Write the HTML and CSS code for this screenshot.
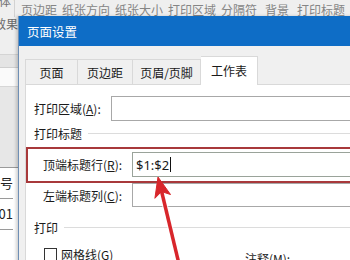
FILE: index.html
```html
<!DOCTYPE html>
<html lang="zh-CN">
<head>
    <meta charset="UTF-8">
    <title>页面设置</title>
    <link rel="stylesheet" href="styles.css">
</head>
<body>
<div class="app">
    <!-- excel behind the dialog -->
    <div class="ribbon">
        <div class="ribbon-top">
            <div class="font-box">宋体 ▾</div>
            <div class="menu">
                <span>页边距</span>
                <span>纸张方向</span>
                <span>纸张大小</span>
                <span>打印区域</span>
                <span>分隔符</span>
                <span class="wide">背景</span>
                <span class="wide">打印标题</span>
            </div>
        </div>
        <div class="ribbon-sub">效果</div>
    </div>
    <div class="sheet">
        <div class="bar"></div>
        <div class="formula"></div>
        <div class="heads"></div>
        <div class="cell"><span>编号</span></div>
        <div class="cell"><span>001</span></div>
        <div class="cell"></div>
    </div>

    <div class="dialog">
        <div class="title-bar">页面设置</div>
        <div class="dialog-body">
            <div class="tabs">
                <div class="tab t1">页面</div>
                <div class="tab t2">页边距</div>
                <div class="tab t3">页眉/页脚</div>
                <div class="tab t4 active">工作表</div>
            </div>
            <div class="panel">
                <div class="row row-area">
                    <label class="lbl">打印区域(<u>A</u>):</label>
                    <div class="input"></div>
                </div>
                <div class="group">
                    <span>打印标题</span>
                    <div class="rule"></div>
                </div>
                <div class="mark">
                    <div class="row row-sub">
                        <label class="lbl lbl-sub">顶端标题行(<u>R</u>):</label>
                        <div class="input focus"><span class="val">$1:$2</span><span class="caret"></span></div>
                    </div>
                </div>
                <div class="row row-sub row-left">
                    <label class="lbl lbl-sub">左端标题列(<u>C</u>):</label>
                    <div class="input"></div>
                </div>
                <div class="group group-print">
                    <span>打印</span>
                    <div class="rule"></div>
                </div>
                <div class="checks">
                    <div class="check"><span class="box"></span>网格线(<u>G</u>)</div>
                    <div class="note">注释(<u>M</u>):</div>
                </div>
            </div>
        </div>
    </div>

    <svg class="arrow" width="350" height="260" viewBox="0 0 350 260">
        <line x1="161.5" y1="191" x2="179" y2="264" stroke="#fff" stroke-width="6" opacity="0.7"/>
        <line x1="161.5" y1="191" x2="179" y2="264" stroke="#d8262b" stroke-width="3.5"/>
        <polygon points="158,177 170.5,194.5 161.5,191.6 154.9,198.3" fill="#d8262b" stroke="#d8262b" stroke-width="1" stroke-linejoin="round"/>
    </svg>
</div>
</body>
</html>
```

FILE: styles.css
```css
body {
    margin: 0;
    font-family: "Noto Sans CJK SC", "Noto Sans", sans-serif;
    font-size: 12px;
    color: #1a1a1a;
}

.app {
    position: relative;
    width: 350px;
    height: 260px;
    overflow: hidden;
    background: #fff;
}

/* background spreadsheet */
.ribbon {
    height: 55px;
    background: #efefef;
    border-bottom: 1px solid #d4d4d4;
    box-sizing: border-box;
}

.ribbon-top {
    display: flex;
    height: 17px;
}

.font-box {
    width: 39px;
    border-right: 1px solid #d2d2d2;
    margin-left: -13px;
    margin-top: -6px;
    line-height: 14px;
    color: #707070;
    overflow: hidden;
    white-space: nowrap;
}

.menu {
    display: flex;
    padding-left: 6px;
    padding-top: 1px;
    color: #858585;
    line-height: 17px;
    white-space: nowrap;
}

.menu span {
    margin-right: 5px;
}

.menu span.wide {
    margin-left: 3px;
}

.ribbon-sub {
    margin-left: -6px;
    line-height: 14px;
    color: #6a6a6a;
}

.sheet .bar {
    height: 12px;
    background: #e4e4e4;
    border-bottom: 1px solid #cfcfcf;
}

.sheet .formula {
    height: 18px;
    background: #fafafa;
    border-bottom: 1px solid #d6d6d6;
}

.sheet .heads {
    height: 80px;
    background: #e7e7e7;
    border-bottom: 1px solid #9a9a9a;
}

.sheet .cell {
    height: 30px;
    border-bottom: 1px solid #9a9a9a;
    line-height: 30px;
    font-size: 13px;
    color: #222;
    display: flex;
    justify-content: flex-end;
    width: 13px;
    white-space: nowrap;
}

/* page setup dialog */
.dialog {
    position: absolute;
    left: 18px;
    top: 16px;
    width: 345px;
    height: 250px;
    background: #f0f0f0;
    border-left: 1px solid #6f8fb5;
    box-shadow: -2px 0 3px rgba(0, 0, 0, 0.18);
}

.title-bar {
    height: 30px;
    line-height: 31px;
    padding-left: 8px;
    background: #0e6dc6;
    color: #fff;
    font-size: 12.5px;
}

.dialog-body {
    padding: 10px 0 0 6px;
}

.tabs {
    display: flex;
    align-items: flex-end;
    height: 28px;
}

.tab {
    height: 25px;
    line-height: 26px;
    text-align: center;
    box-sizing: border-box;
    border: 1px solid #d9d9d9;
    border-bottom: none;
    border-left: none;
    background: #f0f0f0;
}

.tab.t1 {
    width: 53px;
    border-left: 1px solid #d9d9d9;
}

.tab.t2 {
    width: 55px;
}

.tab.t3 {
    width: 68px;
}

.tab.t4 {
    width: 57px;
}

.tab.active {
    height: 29px;
    line-height: 28px;
    background: #fff;
    margin-bottom: -1px;
    position: relative;
}

.panel {
    background: #fff;
    border: 1px solid #d9d9d9;
    height: 200px;
    padding: 11px 0 0 8px;
}

.row {
    display: flex;
    align-items: center;
    height: 25px;
}

.lbl {
    width: 77px;
    flex-shrink: 0;
}

.input {
    flex: 1;
    height: 25px;
    box-sizing: border-box;
    border: 1px solid #a8a8a8;
    background: #fff;
    display: flex;
    align-items: center;
    padding-left: 3px;
}

.input.focus {
    border-color: #9aa39a;
}

.val {
    font-family: "Noto Sans", sans-serif;
    font-size: 13px;
}

.caret {
    width: 1px;
    height: 15px;
    background: #111;
    margin-left: 1px;
}

.group {
    display: flex;
    align-items: center;
    height: 14px;
    margin-top: 5px;
}

.group .rule {
    flex: 1;
    height: 1px;
    background: #dcdcdc;
    margin-left: 6px;
}

.mark {
    margin-top: 7px;
    margin-left: -8px;
    height: 36px;
    box-sizing: border-box;
    border: 2px solid #a8393b;
    border-right: none;
    padding: 3px 0 0 15px;
}

.lbl-sub {
    width: 89px;
}

.row-left {
    padding-left: 9px;
    height: 24px;
}

.row-left .input {
    height: 24px;
}

.group-print {
    margin-top: 13px;
}

.checks {
    display: flex;
    align-items: center;
    margin-top: 13px;
    padding-left: 10px;
    height: 14px;
}

.check {
    display: flex;
    align-items: center;
    width: 201px;
}

.box {
    width: 11px;
    height: 11px;
    border: 1px solid #333;
    margin-right: 4px;
    background: #fff;
}

.note {
    margin-top: 8px;
}

.arrow {
    position: absolute;
    left: 0;
    top: 0;
}
```
